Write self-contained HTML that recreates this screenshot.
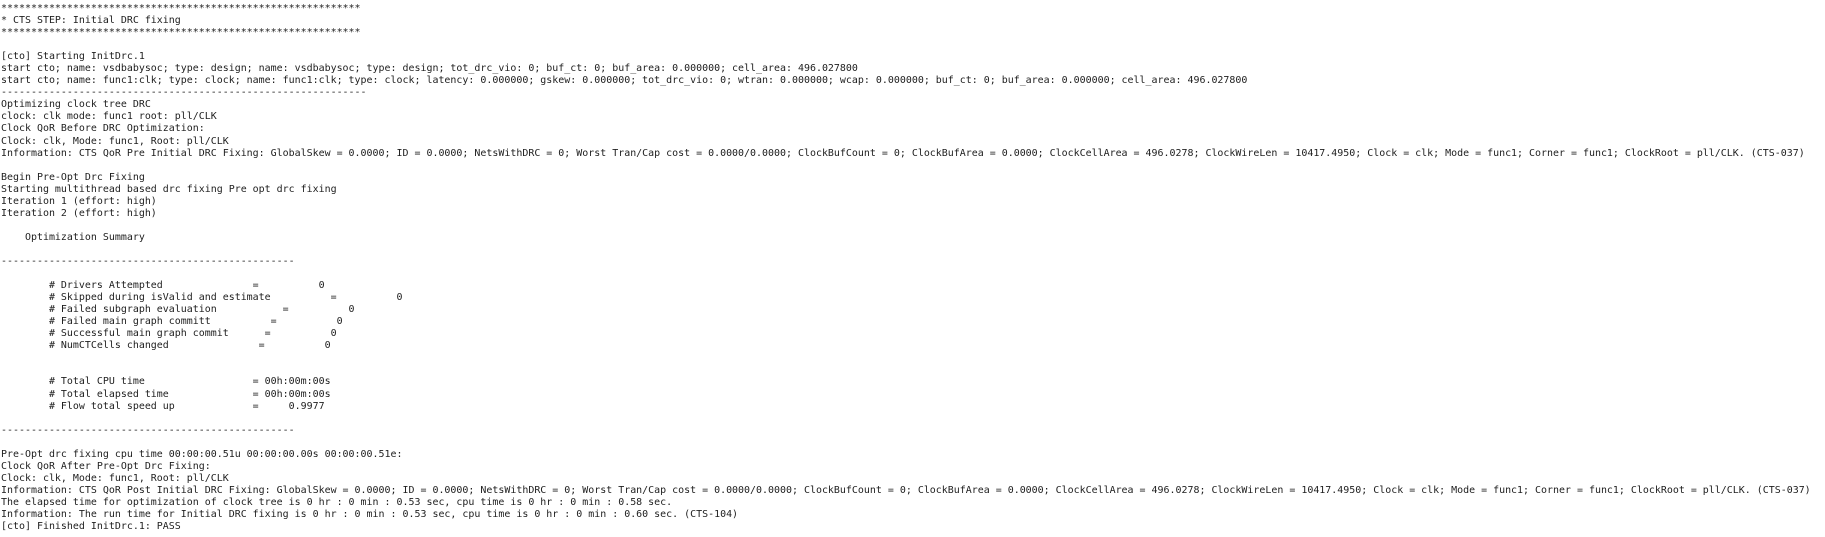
<!DOCTYPE html>
<html><head><meta charset="utf-8"><style>
html,body{margin:0;padding:0;background:#fff;width:1825px;height:537px;overflow:hidden}
pre{margin:0;padding:3px 0 0 1px;font-family:"DejaVu Sans Mono","Liberation Mono",monospace;font-size:9.96px;line-height:12.04px;color:#1e1e1e;white-space:pre}
</style></head><body><pre>************************************************************
* CTS STEP: Initial DRC fixing
************************************************************

[cto] Starting InitDrc.1
start cto; name: vsdbabysoc; type: design; name: vsdbabysoc; type: design; tot_drc_vio: 0; buf_ct: 0; buf_area: 0.000000; cell_area: 496.027800
start cto; name: func1:clk; type: clock; name: func1:clk; type: clock; latency: 0.000000; gskew: 0.000000; tot_drc_vio: 0; wtran: 0.000000; wcap: 0.000000; buf_ct: 0; buf_area: 0.000000; cell_area: 496.027800
-------------------------------------------------------------
Optimizing clock tree DRC
clock: clk mode: func1 root: pll/CLK
Clock QoR Before DRC Optimization:
Clock: clk, Mode: func1, Root: pll/CLK
Information: CTS QoR Pre Initial DRC Fixing: GlobalSkew = 0.0000; ID = 0.0000; NetsWithDRC = 0; Worst Tran/Cap cost = 0.0000/0.0000; ClockBufCount = 0; ClockBufArea = 0.0000; ClockCellArea = 496.0278; ClockWireLen = 10417.4950; Clock = clk; Mode = func1; Corner = func1; ClockRoot = pll/CLK. (CTS-037)

Begin Pre-Opt Drc Fixing
Starting multithread based drc fixing Pre opt drc fixing
Iteration 1 (effort: high)
Iteration 2 (effort: high)

    Optimization Summary

-------------------------------------------------

        # Drivers Attempted               =          0
        # Skipped during isValid and estimate          =          0
        # Failed subgraph evaluation           =          0
        # Failed main graph committ          =          0
        # Successful main graph commit      =          0
        # NumCTCells changed               =          0


        # Total CPU time                  = 00h:00m:00s
        # Total elapsed time              = 00h:00m:00s
        # Flow total speed up             =     0.9977

-------------------------------------------------

Pre-Opt drc fixing cpu time 00:00:00.51u 00:00:00.00s 00:00:00.51e:
Clock QoR After Pre-Opt Drc Fixing:
Clock: clk, Mode: func1, Root: pll/CLK
Information: CTS QoR Post Initial DRC Fixing: GlobalSkew = 0.0000; ID = 0.0000; NetsWithDRC = 0; Worst Tran/Cap cost = 0.0000/0.0000; ClockBufCount = 0; ClockBufArea = 0.0000; ClockCellArea = 496.0278; ClockWireLen = 10417.4950; Clock = clk; Mode = func1; Corner = func1; ClockRoot = pll/CLK. (CTS-037)
The elapsed time for optimization of clock tree is 0 hr : 0 min : 0.53 sec, cpu time is 0 hr : 0 min : 0.58 sec.
Information: The run time for Initial DRC fixing is 0 hr : 0 min : 0.53 sec, cpu time is 0 hr : 0 min : 0.60 sec. (CTS-104)
[cto] Finished InitDrc.1: PASS</pre></body></html>
